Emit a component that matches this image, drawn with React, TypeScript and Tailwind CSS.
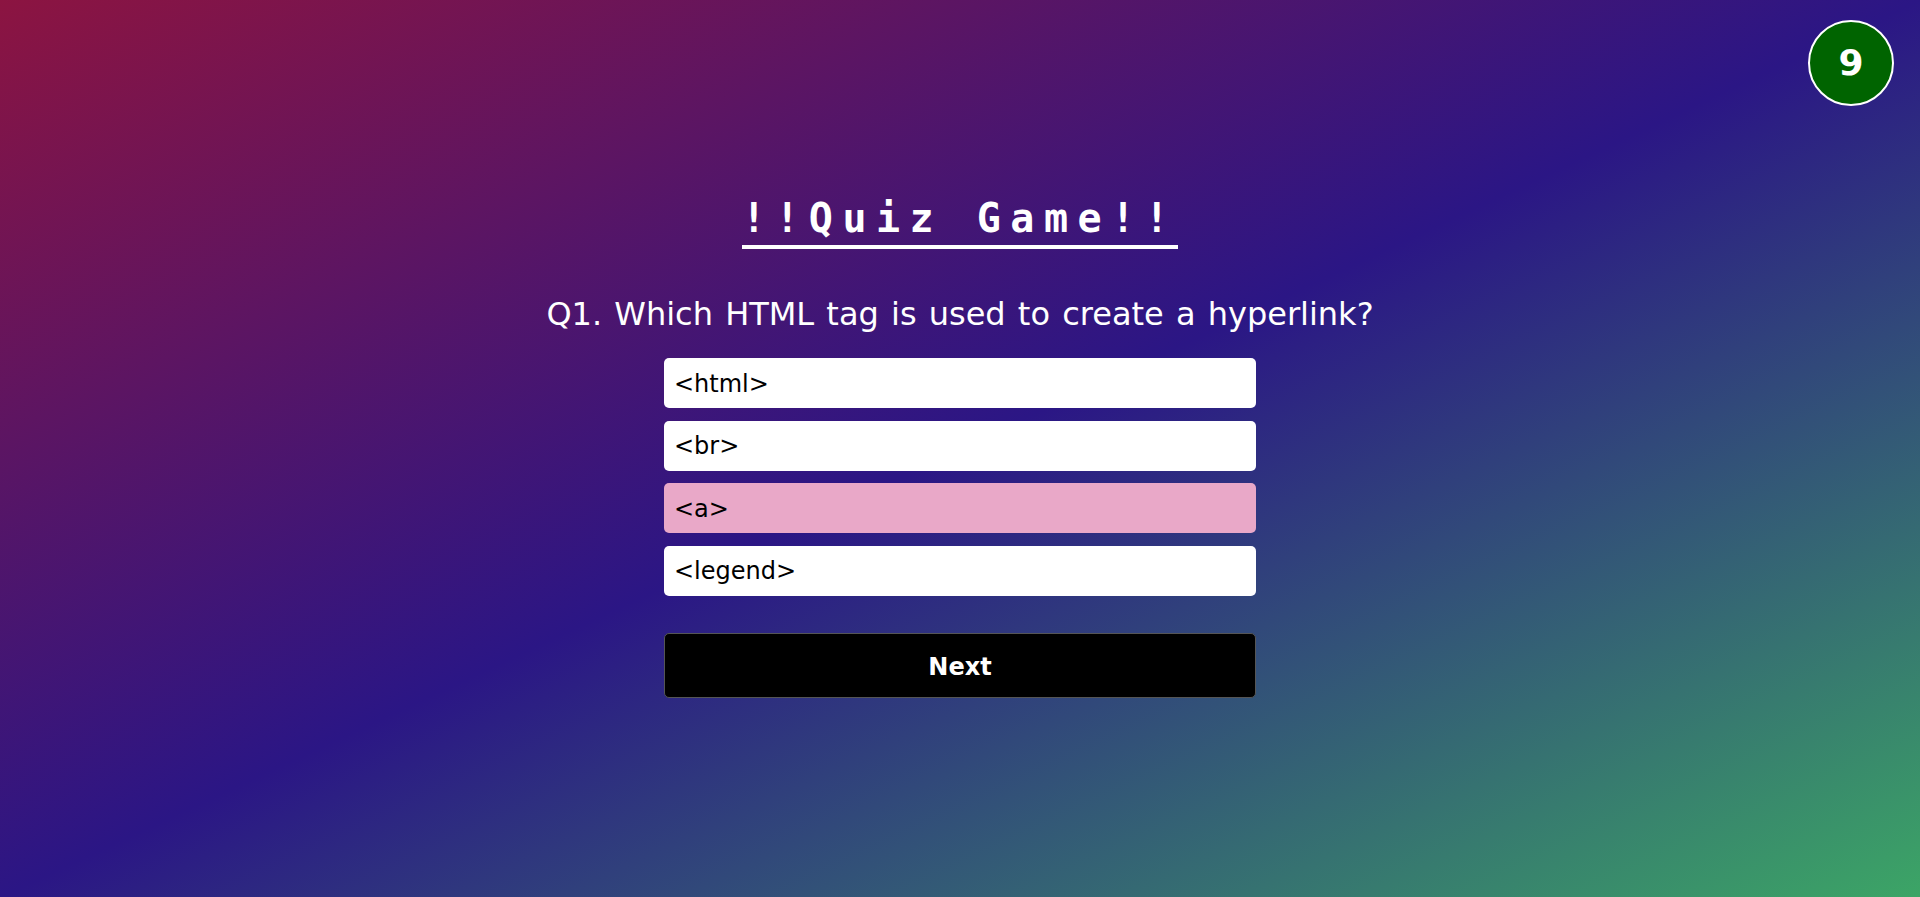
import React from "react";

const options = ["<html>", "<br>", "<a>", "<legend>"];

export default function App() {
  return (
    <div
      className="relative w-full min-h-[897px] h-[897px] overflow-hidden flex flex-col items-center bg-[linear-gradient(to_bottom_right,#8c1441_0%,#2b1685_50%,#3ca566_100%)]"
      style={{ fontFamily: '"DejaVu Sans", Verdana, sans-serif' }}
    >
      <div className="absolute top-[20px] right-[26px] w-[86px] h-[86px] rounded-full bg-[#006400] border-2 border-white flex items-center justify-center text-white font-bold text-[36px] leading-none">
        9
      </div>

      <h1
        className="mt-[194px] inline-block text-white font-bold text-[40px] leading-[48px] tracking-[9.5px] border-b-4 border-white pb-[3px]"
        style={{ fontFamily: '"DejaVu Sans Mono", "Liberation Mono", monospace' }}
      >
        !!Quiz Game!!
      </h1>

      <h2 className="mt-[45px] text-white text-[32px] leading-[40px] font-normal [word-spacing:2px]">
        Q1. Which HTML tag is used to create a hyperlink?
      </h2>

      <div className="mt-[24px] w-[592px] flex flex-col gap-[12.5px]">
        {options.map((o, i) => (
          <div
            key={o}
            className={`h-[50px] rounded-[5px] flex items-center pl-[10px] pt-[1px] text-black text-[24px] ${
              i === 2 ? "bg-[#e9a8c8]" : "bg-white"
            }`}
          >
            {o}
          </div>
        ))}
      </div>

      <button className="mt-[37px] w-[592px] h-[65px] rounded-[5px] bg-black border border-[#555555] text-white font-bold text-[24px] flex items-center justify-center pt-[3px]">
        Next
      </button>
    </div>
  );
}
